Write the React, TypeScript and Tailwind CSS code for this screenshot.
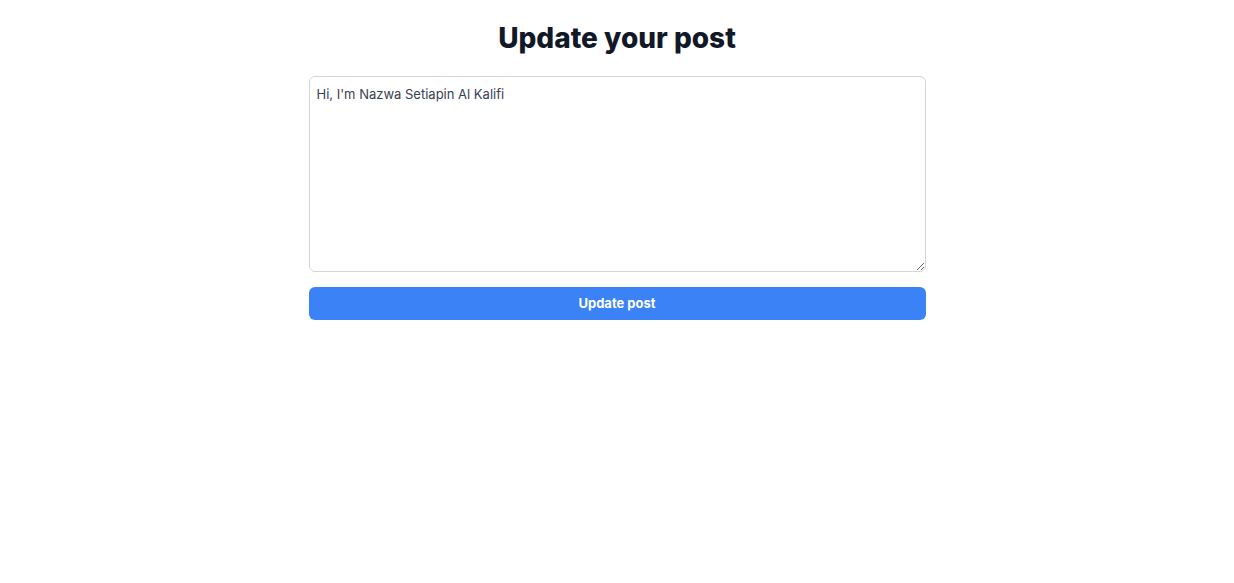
import React, { useState } from 'react'

export default function App() {
  const [content, setContent] = useState("Hi, I'm Nazwa Setiapin Al Kalifi")

  return (
    <div className="min-h-screen bg-white font-['Inter',sans-serif]">
      <div className="mx-auto w-1/2 pt-5">
        <h1 className="mb-5 text-center text-[28px] leading-9 font-extrabold text-[#111827]">Update your post</h1>
        <form className="flex flex-col" onSubmit={(e) => e.preventDefault()}>
          <textarea
            value={content}
            onChange={(e) => setContent(e.target.value)}
            className="h-[196px] w-full rounded-md border border-[#d1d5db] px-[7px] py-2 text-[13px] text-[#374151] outline-none"
          />
          <button
            type="submit"
            className="mt-[15px] h-[33px] w-full rounded-md bg-[#3b82f6] text-[13px] font-bold text-white"
          >
            Update post
          </button>
        </form>
      </div>
    </div>
  )
}
